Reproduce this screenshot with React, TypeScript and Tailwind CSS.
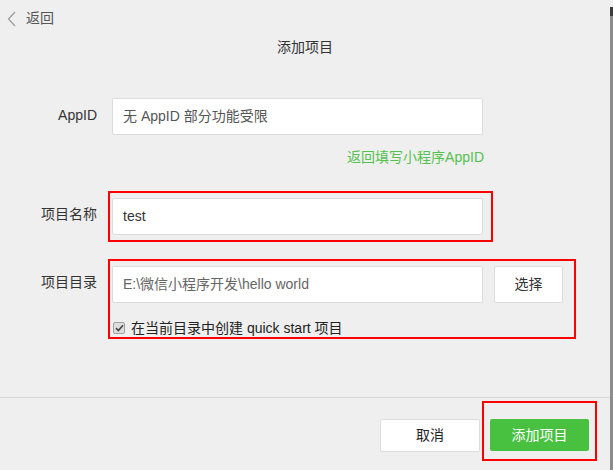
import React from 'react';

const font = { fontFamily: '"Liberation Sans", "Noto Sans CJK SC", sans-serif' };

// red annotation frame drawn over a block
const Mark = ({ className }: { className: string }) => (
  <div className={`pointer-events-none absolute border-2 border-[#ff0000] ${className}`} />
);

const App = () => {
  return (
    <div className="flex h-[470px] w-[613px] bg-[#efefef] text-[14px] text-[#333]" style={font}>
      <div className="flex flex-1 flex-col">
        {/* back */}
        <div className="flex h-[37px] items-center pl-[7px] text-[#555]">
          <svg width="9" height="16" viewBox="0 0 9 16" className="mr-[10px]">
            <path d="M8 1 L1.5 8 L8 15" fill="none" stroke="#9a9a9a" strokeWidth="1.2" />
          </svg>
          <span className="text-[14px]">返回</span>
        </div>

        <div className="text-center text-[14px] leading-[21px] text-[#333]">添加项目</div>

        {/* AppID */}
        <div className="mt-[40px] flex items-center">
          <div className="w-[97px] pb-[3px] text-right">AppID</div>
          <div className="ml-[15px] flex h-[37px] w-[371px] items-center rounded-[2px] border border-[#dcdcdc] bg-white px-[10px] text-[#555]">
            无 AppID 部分功能受限
          </div>
        </div>
        <div className="mt-[12px] w-[484px] text-right leading-[20px] text-[#55c24f]">返回填写小程序AppID</div>

        {/* name */}
        <div className="mt-[31px] flex items-center">
          <div className="w-[97px] pb-[5px] text-right">项目名称</div>
          <div className="relative ml-[15px]">
            <div className="flex h-[37px] w-[371px] items-center rounded-[2px] border border-[#dcdcdc] bg-white px-[10px] text-[#333]">
              test
            </div>
            <Mark className="-bottom-[7px] -left-[4px] -right-[10px] -top-[7px]" />
          </div>
        </div>

        {/* directory */}
        <div className="mt-[31px] flex items-start">
          <div className="flex h-[37px] w-[97px] items-center justify-end pb-[5px]">项目目录</div>
          <div className="relative ml-[15px]">
            <div className="flex items-center gap-[11px]">
              <div className="flex h-[37px] w-[371px] items-center rounded-[2px] border border-[#dcdcdc] bg-white px-[10px] text-[#666]">
                E:\微信小程序开发\hello world
              </div>
              <div className="flex h-[37px] w-[69px] items-center justify-center rounded-[2px] border border-[#dcdcdc] bg-white text-[#333]">
                选择
              </div>
            </div>
            <div className="mt-[17px] flex h-[16px] items-center gap-[6px] pl-[1px] text-[14px] text-[#222]">
              <span className="flex h-[12px] w-[12px] items-center justify-center rounded-[2px] border border-[#a0a0a0] bg-[#dedede]">
                <svg width="9" height="8" viewBox="0 0 9 8">
                  <path d="M1 4.2 L3.4 6.5 L8 1.2" fill="none" stroke="#444" strokeWidth="1.6" />
                </svg>
              </span>
              在当前目录中创建 quick start 项目
            </div>
            <Mark className="-bottom-[3px] -left-[4px] -right-[13px] -top-[7px]" />
          </div>
        </div>

        {/* footer */}
        <div className="mt-auto h-[73px] border-t border-[#d6d6d6]">
          <div className="flex justify-end gap-[10px] pr-[21px] pt-[21px]">
            <div className="flex h-[33px] w-[100px] items-center justify-center rounded-[2px] border border-[#dcdcdc] bg-white text-[#222]">
              取消
            </div>
            <div className="relative">
              <div className="flex h-[32px] w-[99px] items-center justify-center rounded-[2px] bg-[#48c140] text-white">
                添加项目
              </div>
              <Mark className="-bottom-[9px] -left-[8px] -right-[8px] -top-[18px]" />
            </div>
          </div>
        </div>
      </div>

      {/* scrollbar edge */}
      <div className="flex w-[3px] flex-col">
        <div className="h-[7px]" />
        <div className="h-[9px] bg-[#3c3c3c]" />
        <div className="flex-1 bg-[#8c8c8c]" />
      </div>
    </div>
  );
};

export default App;
